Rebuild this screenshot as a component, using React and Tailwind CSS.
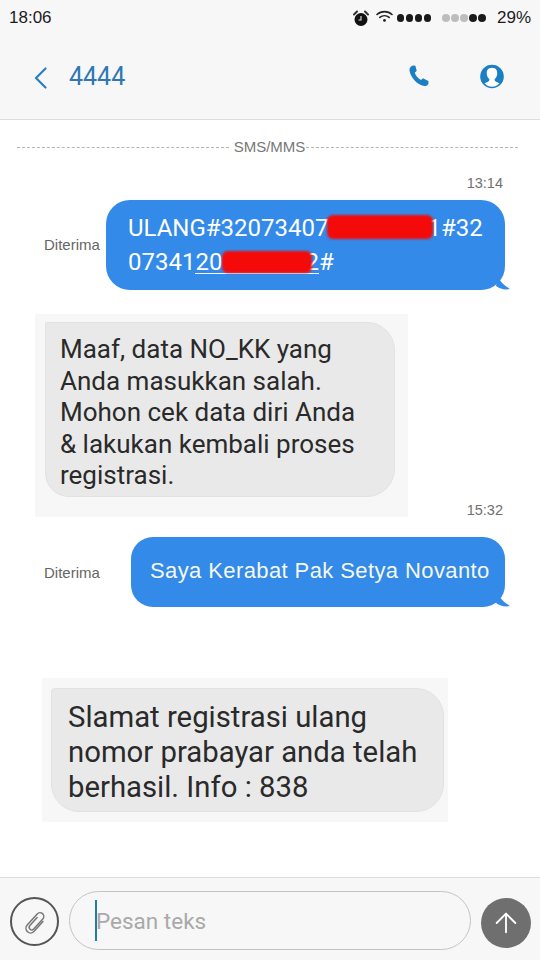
import { ArrowUp } from 'lucide-react';

const ROBOTO = 'font-["Roboto",sans-serif]';

function Alarm() {
  return (
    <svg width="16" height="17" viewBox="0 0 16 17" className="shrink-0">
      <circle cx="8" cy="9.5" r="6.5" fill="#111" />
      <path d="M1 4.5 L4 1.5 M15 4.5 L12 1.5" stroke="#333" strokeWidth="2" strokeLinecap="round" />
      <path d="M8 6 V10 H5.5" stroke="#ddd" strokeWidth="1.2" fill="none" />
    </svg>
  );
}

function Wifi() {
  return (
    <svg width="17" height="13" viewBox="0 0 17 13" className="shrink-0" fill="none" stroke="#222" strokeLinecap="round">
      <path d="M1 4.5 C5 0.6 12 0.6 16 4.5" strokeWidth="1.6" />
      <path d="M3.8 7.4 C6.5 5.2 10.5 5.2 13.2 7.4" strokeWidth="1.6" />
      <circle cx="8.5" cy="10.4" r="1.4" fill="#222" stroke="none" />
    </svg>
  );
}

function Dots({ colors }) {
  return (
    <div className="flex gap-[1.5px]">
      {colors.map((c, i) => (
        <span key={i} className={`w-[7.5px] h-[7.5px] rounded-full ${c === 1 ? 'bg-[#1a1a1a]' : 'bg-[#bdbdbd]'}`} />
      ))}
    </div>
  );
}

function PhoneIcon() {
  return (
    <svg width="22" height="22" viewBox="0 0 22 23">
      <path
        d="M4.6 0.6 L7.2 0.9 L8.6 6 L6.6 8 C7.6 11 10.2 14.2 13.2 15.6 L15.2 13.8 L20.8 16.6 L21 19.2 C20.4 21.4 18.4 22.4 16.4 22 C8.8 20.2 2.6 13.4 1.1 6.2 C0.7 3.6 2.2 1.3 4.6 0.6 Z"
        fill="#1b7fc4"
      />
    </svg>
  );
}

function PersonIcon() {
  return (
    <svg width="24" height="25" viewBox="0 0 24 25">
      <circle cx="12" cy="12.5" r="11.8" fill="#1b7fc4" />
      <path
        d="M12 3.8 C16 3.8 17.6 6.6 17.2 10 C16.9 12.6 15.8 14.2 14.6 15.2 C14.5 16.6 15.2 17.4 16.6 18 L19.4 19.2 C17.4 21.6 14.8 22.8 12 22.8 C9.2 22.8 6.6 21.6 4.6 19.2 L7.4 18 C8.8 17.4 9.5 16.6 9.4 15.2 C8.2 14.2 7.1 12.6 6.8 10 C6.4 6.6 8 3.8 12 3.8 Z"
        fill="#ffffff"
      />
    </svg>
  );
}

function ClipIcon() {
  return (
    <svg width="30" height="30" viewBox="0 0 32 32" fill="none" stroke="#777" strokeWidth="1.6" strokeLinecap="round">
      <g transform="rotate(42 16 16)">
        <path d="M14.5 11 V22.5 a2.75 2.75 0 0 0 5.5 0 V8 a4 4 0 0 0 -8 0 V24 a5 5 0 0 0 10 0 V10" />
      </g>
    </svg>
  );
}

function Tail() {
  return (
    <svg width="14" height="14" viewBox="0 0 14 14" className="absolute right-[-5px] bottom-0">
      <path d="M2 0 C4 6 8 9 14 13 C9 14 4 13 0 10 Z" fill="#338ae8" />
    </svg>
  );
}

function TimeStamp({ children, className }) {
  return (
    <div className={`flex justify-end pr-[37px] text-[14.5px] leading-[18px] text-[#6f6f6f] font-["Liberation_Sans",sans-serif] ${className}`}>
      {children}
    </div>
  );
}

function Status({ className = '' }) {
  return <span className={`w-[55px] shrink-0 text-[15px] text-[#666] font-["Liberation_Sans",sans-serif] ${className}`}>Diterima</span>;
}

export default function App() {
  return (
    <div className="w-[540px] h-[960px] bg-white flex flex-col overflow-hidden">
      {/* status + nav */}
      <header className="h-[120px] shrink-0 bg-[#f7f7f7] border-b border-[#dcdcdc] flex flex-col">
        <div className='h-[36px] flex items-center pl-[9px] pr-[9px] text-[#1c1c1c] text-[17px] font-["Liberation_Sans",sans-serif]'>
          <span>18:06</span>
          <div className="ml-auto flex items-center">
            <Alarm />
            <span className="ml-[7px] -mt-[3px]"><Wifi /></span>
            <span className="ml-[4px]"><Dots colors={[1, 1, 1, 1]} /></span>
            <span className="ml-[11px]"><Dots colors={[0, 0, 0, 1, 1]} /></span>
            <span className="ml-[11px]">29%</span>
          </div>
        </div>
        <div className="h-[46px] mt-[18px] flex items-center pl-[34px] pr-[36px]">
          <svg width="13" height="22" viewBox="0 0 13 22" fill="none" stroke="#2b7fbd" strokeWidth="2.2" strokeLinecap="round" strokeLinejoin="round" className="mt-[2px]">
            <path d="M11.5 1.5 L2 11 L11.5 20.5" />
          </svg>
          <span className={`ml-[22px] text-[25px] text-[#2f78b4] ${ROBOTO}`}>4444</span>
          <div className="ml-auto flex items-center gap-[50px] -mt-[2px]">
            <PhoneIcon />
            <PersonIcon />
          </div>
        </div>
      </header>

      {/* messages */}
      <div className="flex-1 flex flex-col">
        <div className="mt-[18px] ml-[17px] mr-[22px] h-[18px] flex items-center gap-[1px]">
          <span className="flex-1 border-t border-dashed border-[#b5b5b5]" />
          <span className='ml-[4px] text-[15px] text-[#777] font-["Liberation_Sans",sans-serif]'>SMS/MMS</span>
          <span className="flex-1 border-t border-dashed border-[#b5b5b5]" />
        </div>

        <TimeStamp className="mt-[18px]">13:14</TimeStamp>

        <div className="mt-[8px] flex items-center pl-[44px]">
          <Status />
          <div className={`relative ml-[7px] w-[399px] h-[90px] rounded-[24px] bg-[#338ae8] pl-[22px] pt-[11px] text-white text-[24px] leading-[34px] ${ROBOTO}`}>
            <div>
              ULANG#32073407
              <span className="inline-block w-[106px] h-[24px] -ml-[2px] -mr-[5px] bg-[#f50a0a] rounded-[6px] blur-[1px] align-[-3px]" />
              1#32
            </div>
            <div>
              07341
              <span className="inline-block leading-[22px] border-b border-white">
                20
                <span className="inline-block w-[90px] h-[22px] -mr-[7px] bg-[#f50a0a] rounded-[6px] blur-[1px] align-[-3px]" />
                2
              </span>
              #
            </div>
            <Tail />
          </div>
        </div>

        <div className="mt-[24px] ml-[35px] w-[373px] h-[203px] bg-[#f7f7f7] pl-[10px] pt-[8px]">
          <div className={`w-[350px] h-[175px] bg-[#e9e9e9] border border-[#e2e2e2] rounded-tr-[28px] rounded-br-[28px] rounded-bl-[24px] rounded-tl-[2px] pl-[14px] pt-[11px] text-[#2a2a2a] text-[26px] leading-[31.5px] ${ROBOTO}`}>
            Maaf, data NO_KK yang<br />
            Anda masukkan salah.<br />
            Mohon cek data diri Anda<br />
            &amp; lakukan kembali proses<br />
            registrasi.
          </div>
        </div>

        <TimeStamp className="-mt-[16px]">15:32</TimeStamp>

        <div className="mt-[18px] flex items-center pl-[44px]">
          <Status className="mt-[2px]" />
          <div className='relative ml-[32px] w-[374px] h-[70px] rounded-[22px] bg-[#338ae8] flex items-center pl-[19px] pb-[3px] text-[#f5f8ee] text-[22px] tracking-[0.4px] font-["Liberation_Sans",sans-serif]'>
            Saya Kerabat Pak Setya Novanto
            <Tail />
          </div>
        </div>

        <div className="mt-[71px] ml-[42px] w-[406px] h-[144px] bg-[#f7f7f7] pl-[9px] pt-[10px]">
          <div className={`w-[393px] h-[124px] bg-[#e9e9e9] border border-[#e2e2e2] rounded-[28px] rounded-tl-[4px] pl-[16px] pt-[11px] text-[#2a2a2a] text-[29.3px] leading-[35px] ${ROBOTO}`}>
            Slamat registrasi ulang<br />
            nomor prabayar anda telah<br />
            berhasil. Info : 838
          </div>
        </div>
      </div>

      {/* composer */}
      <footer className="h-[83px] shrink-0 bg-[#f7f7f7] border-t border-[#dcdcdc] flex items-start pt-[13px] pl-[10px]">
        <div className="mt-[6px] w-[49px] h-[49px] rounded-full border-2 border-[#555] flex items-center justify-center">
          <ClipIcon />
        </div>
        <div className={`ml-[10px] w-[402px] h-[59px] rounded-[30px] border border-[#c4c4c4] flex items-center pl-[25px] text-[22.5px] text-[#a9a9a9] ${ROBOTO}`}>
          <span className="w-[2px] h-[41px] bg-[#1f7fa5]" />
          <span className="-ml-[1px] mt-[2px]">Pesan teks</span>
        </div>
        <div className="ml-[10px] mt-[7px] w-[50px] h-[50px] rounded-full bg-[#6f6f6f] flex items-center justify-center">
          <ArrowUp size={32} strokeWidth={1.4} color="#fff" />
        </div>
      </footer>
    </div>
  );
}
